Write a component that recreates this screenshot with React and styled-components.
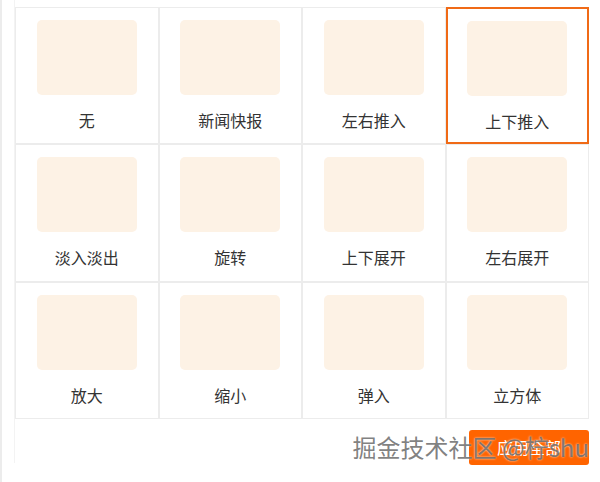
import React from "react";
import styled, { createGlobalStyle } from "styled-components";

const Global = createGlobalStyle`
  html, body { margin: 0; padding: 0; background: #fff; }
  body { font-family: "Noto Sans CJK SC", "Noto Sans", sans-serif; }
`;

const Page = styled.div`
  position: relative;
  width: 600px;
  height: 482px;
  box-sizing: border-box;
  border-left: 2px solid #ececec;
  padding: 0 11px 0 12px;
  overflow: hidden;
`;

const Panel = styled.div`
  border-left: 1px solid #f3f3f3;
  padding-top: 7px;
  height: 463px;
  box-sizing: border-box;
`;

const Grid = styled.div`
  display: grid;
  grid-template-columns: repeat(4, 1fr);
  grid-auto-rows: 137.3px;
`;

const Cell = styled.div`
  box-sizing: border-box;
  border: ${(p) => (p.$active ? "2px solid #f06a16" : "1px solid #ececec")};
  padding-top: 12px;
  display: flex;
  flex-direction: column;
  align-items: center;
  background: #fff;
`;

const Thumb = styled.div`
  width: 100px;
  height: 75px;
  border-radius: 5px;
  background: #fdf2e5;
`;

const Label = styled.div`
  margin-top: 14px;
  font-size: 16px;
  line-height: 22px;
  color: #333;
`;

const Footer = styled.div`
  display: flex;
  justify-content: flex-end;
  padding-top: 11px;
`;

const ApplyButton = styled.button`
  width: 120px;
  height: 35px;
  border: none;
  border-radius: 3px;
  background: #ff6400;
  color: #fff;
  font-family: inherit;
  font-size: 16px;
  padding: 0;
`;

const Watermark = styled.div`
  position: absolute;
  right: 11px;
  top: 432px;
  font-size: 24px;
  line-height: 30px;
  color: rgba(95, 95, 95, 0.8);
  white-space: nowrap;
  pointer-events: none;
  text-shadow: 0 0 2px rgba(255, 255, 255, 0.9);
`;

const items = [
  "无", "新闻快报", "左右推入", "上下推入",
  "淡入淡出", "旋转", "上下展开", "左右展开",
  "放大", "缩小", "弹入", "立方体",
];

export default function App() {
  return (
    <>
      <Global />
      <Page>
        <Panel>
          <Grid>
            {items.map((t, i) => (
              <Cell key={t} $active={i === 3}>
                <Thumb />
                <Label>{t}</Label>
              </Cell>
            ))}
          </Grid>
          <Footer>
            <ApplyButton>应用全部</ApplyButton>
          </Footer>
        </Panel>
        <Watermark>掘金技术社区 @柠shu</Watermark>
      </Page>
    </>
  );
}
